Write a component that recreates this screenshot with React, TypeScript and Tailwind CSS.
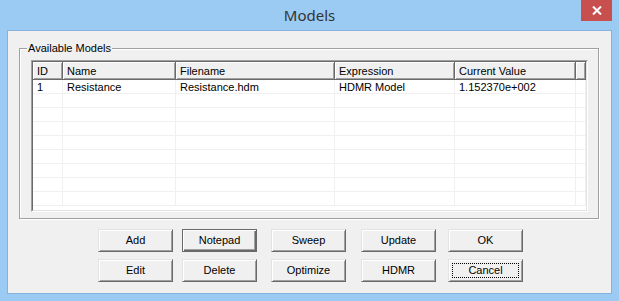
import React from "react";

type Col = { label: string; w: string };

const COLS: Col[] = [
  { label: "ID", w: "w-[30px]" },
  { label: "Name", w: "w-[113px]" },
  { label: "Filename", w: "w-[159px]" },
  { label: "Expression", w: "w-[120px]" },
  { label: "Current Value", w: "w-[121px]" },
  { label: "", w: "flex-1" },
];

const ROWS: string[][] = [
  ["1", "Resistance", "Resistance.hdm", "HDMR Model", "1.152370e+002", ""],
  ...Array.from({ length: 8 }, () => ["", "", "", "", "", ""]),
];

// classic 3D push button
function Btn({
  label,
  ml,
  isDefault = false,
  focused = false,
}: {
  label: string;
  ml: string;
  isDefault?: boolean;
  focused?: boolean;
}) {
  const edge = isDefault
    ? "border-[#696969] shadow-[inset_1px_1px_0_#fff,inset_-1px_-1px_0_#696969,inset_-2px_-2px_0_#a0a0a0]"
    : "border-t-[#e3e3e3] border-l-[#e3e3e3] border-r-[#696969] border-b-[#696969] shadow-[inset_1px_1px_0_#fff,inset_-1px_-1px_0_#a0a0a0]";
  return (
    <div
      className={`relative flex h-[23px] w-[75px] flex-none items-center justify-center border bg-[#f0f0f0] text-[11px] text-black ${edge} ${ml}`}
    >
      {focused && (
        <span className="absolute inset-[3px] border border-dotted border-black" />
      )}
      <span className="relative">{label}</span>
    </div>
  );
}

export default function App() {
  return (
    <div
      className="flex h-[301px] w-[619px] flex-col bg-[#9bcbf3]"
      style={{ fontFamily: '"Liberation Sans", Arial, sans-serif' }}
    >
      {/* title bar */}
      <div className="relative flex h-[30px] flex-none items-center justify-center">
        <span
          className="pt-[1px] text-[15px] text-[#333333]"
          style={{ fontFamily: '"Noto Sans", "Open Sans", sans-serif' }}
        >
          Models
        </span>
        <div className="absolute right-[7px] top-0 flex h-[21px] w-[31px] items-center justify-center bg-[#c7504f]">
          <svg width="10" height="9" viewBox="0 0 10 9" aria-hidden>
            <path d="M1 0.5 L9 8.5 M9 0.5 L1 8.5" stroke="#fff" strokeWidth="2" />
          </svg>
        </div>
      </div>

      {/* client area */}
      <div className="mx-[7px] h-[264px] flex-none border border-[#86b3dd] bg-[#f0f0f0]">
        {/* group box */}
        <div className="relative ml-[11px] mt-[17px] h-[171px] w-[580px] border border-[#a0a0a0] pl-[11px] pt-[11px] shadow-[1px_1px_0_#fff,inset_1px_1px_0_#fff]">
          <span className="absolute left-[7px] top-[-7px] bg-[#f0f0f0] px-[1px] text-[11px] leading-[12px] text-black">
            Available Models
          </span>

          {/* list view */}
          <div className="h-[152px] w-[557px] border border-t-[#a0a0a0] border-l-[#a0a0a0] border-r-white border-b-white">
            <div className="flex h-full w-full flex-col overflow-hidden border border-t-[#696969] border-l-[#696969] border-r-[#e3e3e3] border-b-[#e3e3e3] bg-white">
              {/* header */}
              <div className="flex h-[18px] flex-none border-b border-[#696969] bg-[#f0f0f0]">
                {COLS.map((c, i) => (
                  <div
                    key={i}
                    className={`flex h-full items-center border-r border-[#696969] pl-[4px] pt-[1px] text-[11px] text-black shadow-[inset_1px_1px_0_#fff,inset_-1px_-1px_0_#a0a0a0] ${c.w}`}
                  >
                    {c.label}
                  </div>
                ))}
              </div>
              {/* rows */}
              {ROWS.map((r, ri) => (
                <div key={ri} className="flex h-[14px] flex-none border-b border-[#f0f0f0]">
                  {COLS.map((c, ci) => (
                    <div
                      key={ci}
                      className={`flex h-full items-center border-r border-[#f0f0f0] pl-[4px] pt-[2px] text-[11px] leading-none text-black ${c.w}`}
                    >
                      {r[ci]}
                    </div>
                  ))}
                </div>
              ))}
            </div>
          </div>
        </div>

        {/* buttons */}
        <div className="mt-[10px] flex">
          <Btn label="Add" ml="ml-[90px]" />
          <Btn label="Notepad" ml="ml-[9px]" isDefault />
          <Btn label="Sweep" ml="ml-[14px]" />
          <Btn label="Update" ml="ml-[15px]" />
          <Btn label="OK" ml="ml-[12px]" />
        </div>
        <div className="mt-[7px] flex">
          <Btn label="Edit" ml="ml-[90px]" />
          <Btn label="Delete" ml="ml-[9px]" />
          <Btn label="Optimize" ml="ml-[14px]" />
          <Btn label="HDMR" ml="ml-[15px]" />
          <Btn label="Cancel" ml="ml-[12px]" focused />
        </div>
      </div>
    </div>
  );
}
